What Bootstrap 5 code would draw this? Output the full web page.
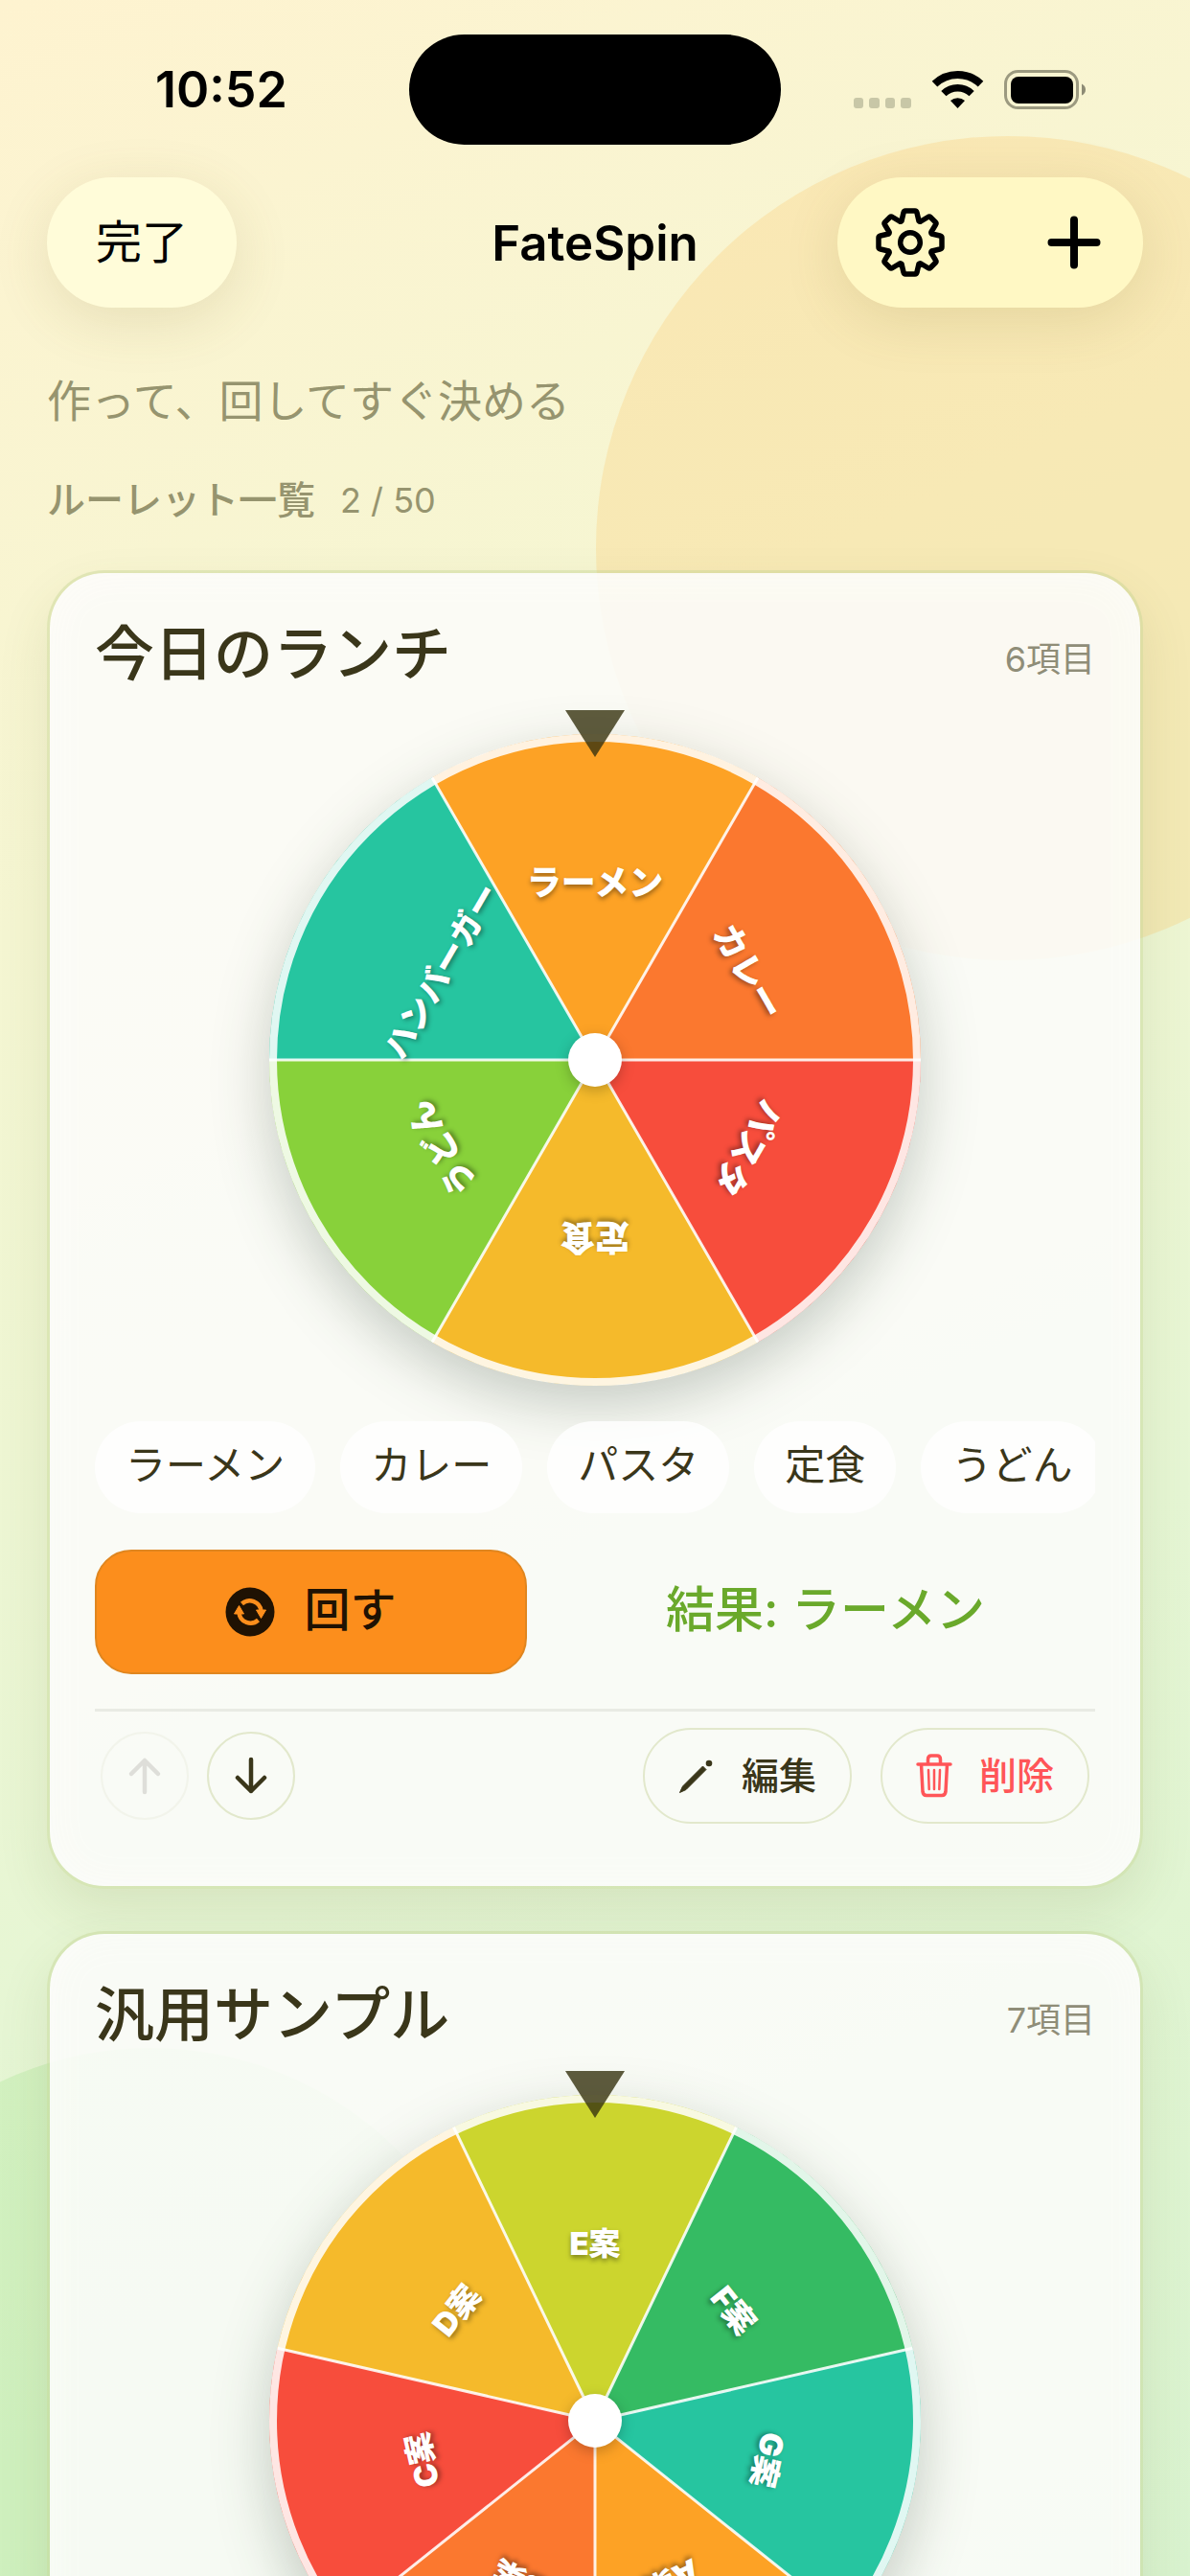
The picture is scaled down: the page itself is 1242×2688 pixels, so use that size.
<!DOCTYPE html>
<html lang="ja">
<head>
<meta charset="utf-8">
<meta name="viewport" content="width=device-width, initial-scale=1">
<title>FateSpin</title>
<link href="https://cdn.jsdelivr.net/npm/bootstrap@5.3.0/dist/css/bootstrap.min.css" rel="stylesheet">
<style>
  body {
    font-family: Inter, "Noto Sans CJK JP", sans-serif;
    color: #3a361a;
    background: linear-gradient(155deg, #fef3d0 0%, #f5f6d2 30%, #e6f6d4 65%, #d9f3cf 100%);
  }
  button { font-family: inherit; }
  .stage { isolation: isolate; }
  .blob { position: absolute; border-radius: 50%; z-index: -1; }
  .blob-sun { width: 860px; height: 860px; top: 142px; right: -240px; background: rgba(252, 202, 115, .31); }
  .blob-leaf { width: 730px; height: 730px; top: 2137px; left: -208px; background: rgba(176, 232, 155, .35); }

  .bar-grid { display: grid; grid-template-columns: 1fr auto 1fr; align-items: center; }
  .status-bar { padding: 36px 109px 0 162px; grid-template-columns: 265px 388px 1fr; color: #000; }
  .clock { font-size: 52px; font-weight: 600; line-height: 1; }
  .island { height: 115px; border-radius: 58px; background: #000; }

  .nav-top { padding: 0 49px; margin-top: 34px; color: #000; z-index: 2; }
  .glass { height: 136px; border-radius: 68px; background: #fffcd9; box-shadow: 0 14px 60px rgba(110, 100, 30, .14); }
  .glass-warm { background: #fff8c4; width: 319px; padding: 0 30px 0 34px; }
  .done-btn { border: 0; padding: 0 51px; font-size: 48px; color: #000; }
  .icon-btn { border: 0; background: none; padding: 0; width: 84px; height: 100px; color: #000; }
  .app-name { font-size: 51px; font-weight: 600; line-height: 1; margin: 0; }

  .scroller { padding: 67px 49px 45px; overflow-y: auto; scrollbar-width: none; min-height: 0; }
  .scroller::-webkit-scrollbar { display: none; }
  .muted { color: #96946f; }
  .tagline { font-size: 46px; line-height: 60px; margin: 0 0 44px; }
  .list-head { gap: 26px; margin-bottom: 43px; }
  .list-name { font-size: 40px; line-height: 56px; font-weight: 500; margin: 0; }
  .list-count { font-size: 36px; line-height: 60px; }

  .wheel-card {
    border: 3px solid rgba(190, 208, 140, .42);
    border-radius: 60px;
    background: rgba(251, 252, 250, .87);
    background-clip: padding-box;
    padding: 45px 47px 65px;
    margin-bottom: 44px;
    box-shadow: 0 24px 54px rgba(80, 90, 30, .11), inset 0 0 40px rgba(255, 255, 255, .4);
  }
  .wheel-title { font-size: 62px; line-height: 80px; font-weight: 500; margin: 0; }
  .item-count { font-size: 36px; line-height: 70px; color: #8f8d78; }
  .wheel { display: block; width: 680px; height: 680px; margin: 43px auto 37px; overflow: visible; }
  .wheel .disc { filter: drop-shadow(0 20px 30px rgba(30, 50, 30, .24)); }
  .wheel .hub { filter: drop-shadow(0 4px 7px rgba(0, 0, 0, .22)); }
  .wheel text {
    font-size: 36px; font-weight: 800; fill: #fff; text-anchor: middle;
    text-shadow: 0 3px 5px rgba(0, 0, 0, .38);
  }
  .wheel .long-name { font-size: 34px; }
  .wheel .seven text { font-size: 33px; font-weight: 900; }

  .chips { gap: 26px; overflow: hidden; }
  .chip { flex: none; height: 96px; line-height: 92px; padding: 0 32px; font-size: 42px; border-radius: 48px; background: rgba(255, 255, 255, .8); }
  .play-row { margin-top: 38px; gap: 30px; }
  .spin-btn, .spin-btn:hover {
    width: 451px; height: 130px; border: 2px solid #e0861f; border-radius: 38px;
    background: #fc8e1c; color: #1f1203; font-size: 48px; font-weight: 500; gap: 30px; line-height: 68px;
  }
  .spin-btn span, .result { padding-bottom: 4px; }
  .result { flex: 1; font-size: 51px; font-weight: 500; color: #6aa92b; text-align: center; }
  .tools { margin-top: 36px; border-top: 3px solid #e9ebe4; padding: 17px 6px 0; }
  .ring-btn { width: 92px; height: 92px; border: 2px solid #e2e8cc; border-radius: 50%; background: none; padding: 0; color: inherit; }
  .ring-btn:disabled { border-color: #f2f4eb; color: #deded9; opacity: 1; }
  .pill-btn { height: 100px; border: 2px solid #e2e8cc; border-radius: 50px; background: none; padding: 0 35px; font-size: 39px; font-weight: 500; color: inherit; gap: 28px; }
  .pill-del { color: #ff5558; }
  svg { display: block; flex: none; }
</style>
</head>
<body class="vh-100 overflow-hidden">
<div class="stage position-relative vh-100 d-flex flex-column overflow-hidden">
  <div class="blob blob-sun"></div>
  <div class="blob blob-leaf"></div>

  <div class="status-bar bar-grid">
    <div class="clock">10:52</div>
    <div class="island"></div>
    <div class="d-flex justify-content-end align-items-center">
      <svg width="242" height="42" viewBox="0 0 242 42" aria-hidden="true">
        <g fill="#c8c7a7"><rect y="29" width="10" height="11" rx="3"/><rect x="16" y="29" width="11" height="11" rx="3"/><rect x="33" y="29" width="10" height="11" rx="3"/><rect x="49" y="29" width="11" height="11" rx="3"/></g>
        <g transform="translate(82 1)" fill="none" stroke="#000">
          <path d="M2.500 13.700A34.500 34.500 0 0 1 50.500 13.700" stroke-width="8"/>
          <path d="M11.900 23.600A21 21 0 0 1 41.100 23.600" stroke-width="7.500"/>
          <path d="M26.500 39L19 31a11.500 11.500 0 0 1 15 0z" fill="#000" stroke="none"/>
        </g>
        <rect x="158.500" y="1.500" width="75" height="38" rx="13" fill="none" stroke="#9c9a80" stroke-width="3"/>
        <rect x="164" y="7" width="65" height="28" rx="8" fill="#000"/>
        <path d="M238 14.500q4 2 4 6t-4 6z" fill="#8d8b75"/>
      </svg>
    </div>
  </div>

  <header class="nav-top bar-grid position-relative">
    <div><button type="button" class="glass done-btn">完了</button></div>
    <h1 class="app-name">FateSpin</h1>
    <div class="d-flex justify-content-end">
      <div class="glass glass-warm d-flex align-items-center justify-content-between">
        <button type="button" class="icon-btn d-flex align-items-center justify-content-center" aria-label="設定">
          <svg width="76" height="76" viewBox="-38 -38 76 76" fill="none" stroke="currentColor" stroke-width="5.500" stroke-linejoin="round">
            <path d="M-5-33H5Q6.500-33 7-31L9-22.500Q10-21.500 11-22L18.500-26.500Q20-27.500 21-26.500L26.500-21Q27.500-20 26.500-18.500L22-11Q21.500-10 22.500-9L31-7Q33-6.500 33-5V5Q33 6.500 31 7L22.500 9Q21.500 10 22 11L26.500 18.500Q27.500 20 26.500 21L21 26.500Q20 27.500 18.500 26.500L11 22Q10 21.500 9 22.500L7 31Q6.500 33 5 33H-5Q-6.500 33-7 31L-9 22.500Q-10 21.500-11 22L-18.500 26.500Q-20 27.500-21 26.500L-26.500 21Q-27.500 20-26.500 18.500L-22 11Q-21.500 10-22.500 9L-31 7Q-33 6.500-33 5V-5Q-33-6.500-31-7L-22.500-9Q-21.500-10-22-11L-26.500-18.500Q-27.500-20-26.500-21L-21-26.500Q-20-27.500-18.500-26.500L-11-22Q-10-21.500-9-22.500L-7-31Q-6.500-33-5-33z"/>
            <circle r="10.300"/>
          </svg>
        </button>
        <button type="button" class="icon-btn d-flex align-items-center justify-content-center" aria-label="追加">
          <svg width="56" height="56" viewBox="-28 -28 56 56" stroke="currentColor" stroke-width="8" stroke-linecap="round"><path d="M-23.500 0H23.500M0-23.500V23.500"/></svg>
        </button>
      </div>
    </div>
  </header>

  <main class="scroller flex-grow-1">
    <p class="tagline muted">作って、回してすぐ決める</p>
    <div class="list-head d-flex align-items-center muted">
      <h2 class="list-name">ルーレット一覧</h2>
      <span class="list-count">2 / 50</span>
    </div>

    <section class="wheel-card">
      <div class="d-flex justify-content-between align-items-end">
        <h3 class="wheel-title">今日のランチ</h3>
        <span class="item-count">6項目</span>
      </div>
      <svg class="wheel" viewBox="-340 -340 680 680" role="img" aria-label="今日のランチのルーレット">
        <g class="disc">
          <path fill="#fda225" d="M0 0L-170-294.400A340 340 0 0 1 170-294.400z"/>
          <path fill="#fb782f" d="M0 0L170-294.400A340 340 0 0 1 340 0z"/>
          <path fill="#f74d3c" d="M0 0H340A340 340 0 0 1 170 294.400z"/>
          <path fill="#f5ba2b" d="M0 0L170 294.400A340 340 0 0 1-170 294.400z"/>
          <path fill="#88d13a" d="M0 0L-170 294.400A340 340 0 0 1-340 0z"/>
          <path fill="#26c5a0" d="M0 0H-340A340 340 0 0 1-170-294.400z"/>
        </g>
        <path d="M-340 0H340M-170-294.400L170 294.400M170-294.400L-170 294.400" stroke="#fff" stroke-opacity=".88" stroke-width="3"/>
        <circle r="336" fill="none" stroke="#fff" stroke-opacity=".86" stroke-width="8"/>
        <g>
          <text y="-172">ラーメン</text>
          <text y="-172" transform="rotate(60)">カレー</text>
          <text y="-172" transform="rotate(120)">パスタ</text>
          <text y="-172" transform="rotate(180)">定食</text>
          <text y="-172" transform="rotate(240)">うどん</text>
          <text class="long-name" y="-173" transform="rotate(300)">ハンバーガー</text>
        </g>
        <circle class="hub" r="28" fill="#fff"/>
        <path d="M-31-365H31L0-316z" fill="#36320f" fill-opacity=".8"/>
      </svg>
      <div class="chips d-flex">
        <span class="chip">ラーメン</span><span class="chip">カレー</span><span class="chip">パスタ</span><span class="chip">定食</span><span class="chip">うどん</span>
      </div>
      <div class="play-row d-flex align-items-center">
        <button type="button" class="btn spin-btn d-flex align-items-center justify-content-center p-0">
          <svg width="52" height="52" viewBox="-26 -26 52 52" aria-hidden="true">
            <circle r="25.500" fill="#1f1203"/>
            <g fill="none" stroke="#fc8e1c" stroke-width="4.500"><path d="M-8.500-8.500A12 12 0 0 1 11.500-1"/><path d="M8.500 8.500A12 12 0 0 1-11.500 1"/></g>
            <g fill="#fc8e1c" stroke="#fc8e1c" stroke-linejoin="round"><path d="M6.500-2H16.500L11.500 6.500z"/><path d="M-6.500 2H-16.500L-11.500-6.500z"/></g>
          </svg>
          <span>回す</span>
        </button>
        <div class="result">結果: ラーメン</div>
      </div>
      <div class="tools d-flex align-items-center justify-content-between">
        <div class="d-flex" style="gap:19px">
          <button type="button" class="ring-btn d-flex align-items-center justify-content-center" disabled aria-label="上へ">
            <svg width="36" height="40" viewBox="0 0 36 40" fill="none" stroke="currentColor" stroke-width="4.500" stroke-linecap="round" stroke-linejoin="round"><path d="M18 37V4M4 18L18 4L32 18"/></svg>
          </button>
          <button type="button" class="ring-btn d-flex align-items-center justify-content-center" aria-label="下へ">
            <svg width="36" height="40" viewBox="0 0 36 40" fill="none" stroke="currentColor" stroke-width="4.500" stroke-linecap="round" stroke-linejoin="round"><path d="M18 3V36M4 22L18 36L32 22"/></svg>
          </button>
        </div>
        <div class="d-flex" style="gap:30px">
          <button type="button" class="pill-btn d-flex align-items-center">
            <svg width="38" height="40" viewBox="0 0 38 40" fill="currentColor"><path d="M1.500 37.500L4.500 31L25.500 10L29 13.500L8 34.500z" stroke="currentColor" stroke-linejoin="round"/><circle cx="32" cy="7" r="3.300"/></svg>
            <span>編集</span>
          </button>
          <button type="button" class="pill-btn pill-del d-flex align-items-center">
            <svg width="38" height="46" viewBox="0 0 38 46" fill="none" stroke="currentColor" stroke-width="3.500" stroke-linecap="round" stroke-linejoin="round"><path d="M2 11H36M5.500 11L7 39.500Q7.500 43.500 11 43.500H27Q30.500 43.500 31 39.500L32.500 11M12.500 10V6Q12.500 2 16 2H22Q25.500 2 25.500 6V10"/><path d="M13 17L13.700 37M19 17V37M25 17L24.300 37" stroke-width="2.500"/></svg>
            <span>削除</span>
          </button>
        </div>
      </div>
    </section>

    <section class="wheel-card">
      <div class="d-flex justify-content-between align-items-end">
        <h3 class="wheel-title">汎用サンプル</h3>
        <span class="item-count">7項目</span>
      </div>
      <svg class="wheel" viewBox="-340 -340 680 680" role="img" aria-label="汎用サンプルのルーレット">
        <g class="disc">
          <path fill="#ccd52e" d="M0 0L-147.500-306.300A340 340 0 0 1 147.500-306.300z"/>
          <path fill="#35bb63" d="M0 0L147.500-306.300A340 340 0 0 1 331.500-75.700z"/>
          <path fill="#26c5a0" d="M0 0L331.500-75.700A340 340 0 0 1 265.800 212z"/>
          <path fill="#fda225" d="M0 0L265.800 212A340 340 0 0 1 0 340z"/>
          <path fill="#fb782f" d="M0 0V340A340 340 0 0 1-265.800 212z"/>
          <path fill="#f74d3c" d="M0 0L-265.800 212A340 340 0 0 1-331.500-75.700z"/>
          <path fill="#f5ba2b" d="M0 0L-331.500-75.700A340 340 0 0 1-147.500-306.300z"/>
        </g>
        <path d="M0 0L-147.500-306.300M0 0L147.500-306.300M0 0L331.500-75.700M0 0L265.800 212M0 0V340M0 0L-265.800 212M0 0L-331.500-75.700" stroke="#fff" stroke-opacity=".88" stroke-width="3"/>
        <circle r="336" fill="none" stroke="#fff" stroke-opacity=".86" stroke-width="8"/>
        <g class="seven">
          <text y="-173">E案</text>
          <text y="-173" transform="rotate(51.430)">F案</text>
          <text y="-173" transform="rotate(102.860)">G案</text>
          <text y="-173" transform="rotate(154.290)">A案</text>
          <text y="-173" transform="rotate(205.710)">B案</text>
          <text y="-173" transform="rotate(257.140)">C案</text>
          <text y="-173" transform="rotate(308.570)">D案</text>
        </g>
        <circle class="hub" r="28" fill="#fff"/>
        <path d="M-31-365H31L0-316z" fill="#36320f" fill-opacity=".8"/>
      </svg>
    </section>
  </main>
</div>
<script src="https://cdn.jsdelivr.net/npm/bootstrap@5.3.0/dist/js/bootstrap.bundle.min.js"></script>
</body>
</html>
